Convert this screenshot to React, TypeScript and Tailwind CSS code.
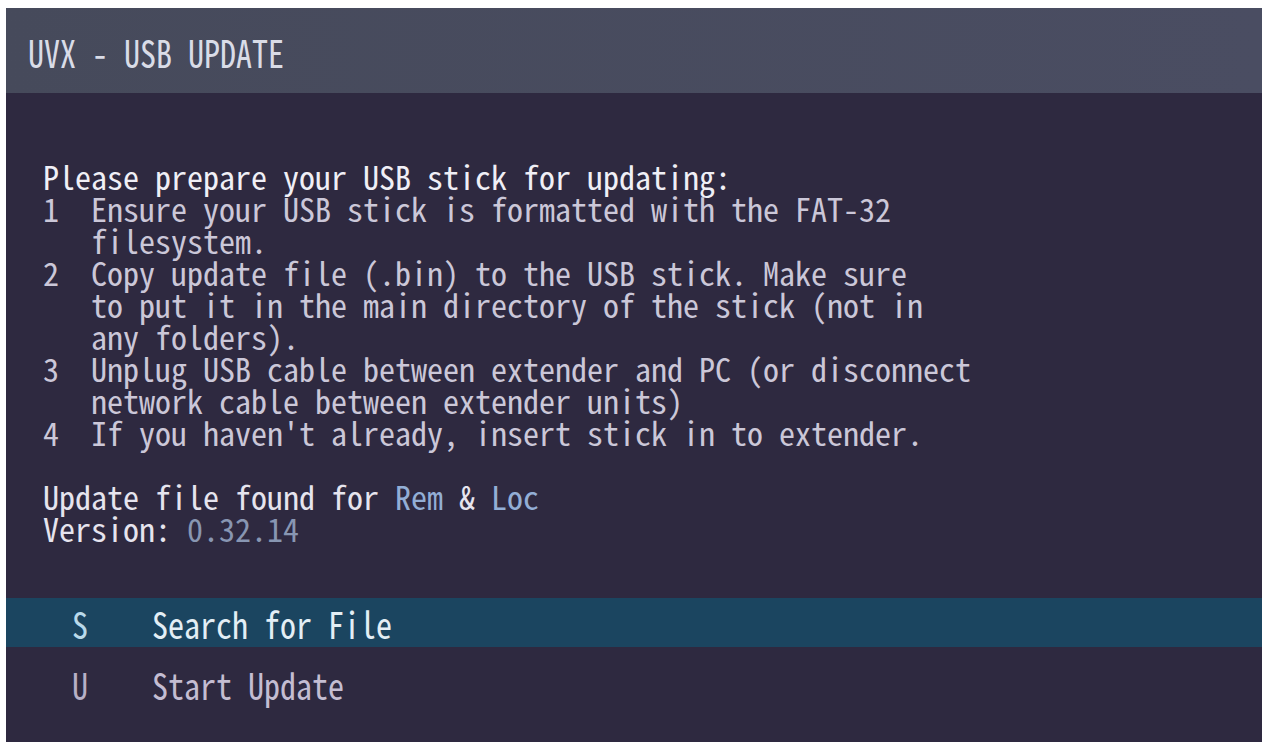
const mono = "font-['Noto_Sans_Mono_CJK_JP','DejaVu_Sans_Mono',monospace]";

const steps: { n: string; lines: string[] }[] = [
  { n: "1", lines: ["Ensure your USB stick is formatted with the FAT-32", "filesystem."] },
  {
    n: "2",
    lines: [
      "Copy update file (.bin) to the USB stick. Make sure",
      "to put it in the main directory of the stick (not in",
      "any folders).",
    ],
  },
  {
    n: "3",
    lines: [
      "Unplug USB cable between extender and PC (or disconnect",
      "network cable between extender units)",
    ],
  },
  { n: "4", lines: ["If you haven't already, insert stick in to extender."] },
];

function MenuRow({ hotkey, label, active }: { hotkey: string; label: string; active?: boolean }) {
  return (
    <div
      className={`flex h-[49px] items-center pl-[66px] text-[32px] leading-none whitespace-pre ${
        active ? "bg-[#1b4560]" : ""
      }`}
    >
      <span className={`inline-block scale-y-[1.15] ${active ? "text-[#b9d9ea]" : "text-[#b7b0c6]"}`}>
        {hotkey}
      </span>
      <span className={`ml-[4ch] inline-block scale-y-[1.15] ${active ? "text-[#e3eef5]" : "text-[#c4bdd2]"}`}>
        {label}
      </span>
    </div>
  );
}

export default function App() {
  return (
    <div className={`h-[742px] w-[1264px] overflow-hidden bg-white pl-[6px] pt-[8px] ${mono}`}>
      <div className="flex h-[734px] w-[1256px] flex-col bg-[#2e2940]">
        <div className="flex h-[85px] shrink-0 items-center bg-gradient-to-r from-[#464a5b] to-[#4a4d62] pl-[22px]">
          <span className="inline-block scale-y-[1.2] text-[32px] leading-none whitespace-pre text-[#d9dce7]">
            UVX - USB UPDATE
          </span>
        </div>

        <div className="pl-[37px] pt-[67px] text-[32px] leading-[32px]">
          <div className="whitespace-pre text-[#f0eff6]">Please prepare your USB stick for updating:</div>
          {steps.map((s) => (
            <div key={s.n} className="flex text-[#cbc7d8]">
              <div className="w-[3ch] shrink-0 whitespace-pre">{s.n}</div>
              <div>
                {s.lines.map((l) => (
                  <div key={l} className="whitespace-pre">
                    {l}
                  </div>
                ))}
              </div>
            </div>
          ))}

          <div className="mt-[32px] whitespace-pre text-[#e6e4ee]">
            Update file found for <span className="text-[#93aed6]">Rem</span> &amp;{" "}
            <span className="text-[#93aed6]">Loc</span>
          </div>
          <div className="whitespace-pre text-[#e6e4ee]">
            Version: <span className="text-[#8896b2]">0.32.14</span>
          </div>
        </div>

        <div className="mt-[54px] flex flex-col gap-[12px]">
          <MenuRow hotkey="S" label="Search for File" active />
          <MenuRow hotkey="U" label="Start Update" />
        </div>
      </div>
    </div>
  );
}
